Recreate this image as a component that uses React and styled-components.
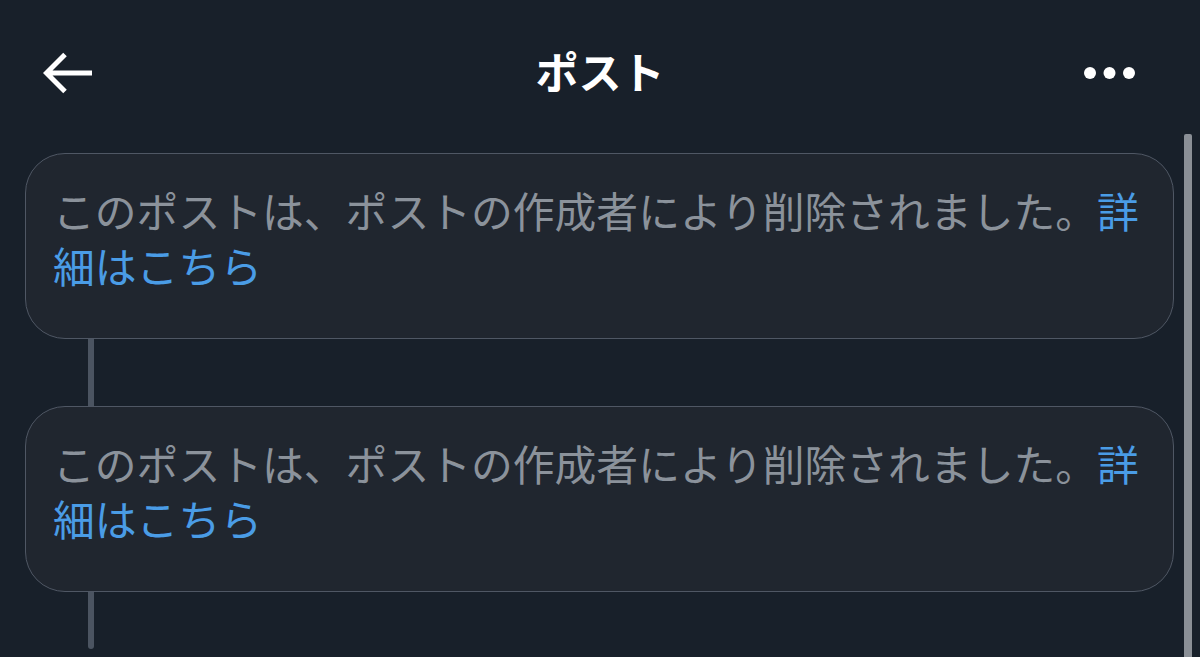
import React from "react";
import styled, { createGlobalStyle } from "styled-components";

const GlobalStyle = createGlobalStyle`
  html, body {
    margin: 0;
    padding: 0;
    background: #18202a;
  }
  body {
    font-family: "Noto Sans CJK JP", "Noto Sans", sans-serif;
  }
`;

const Page = styled.div`
  position: relative;
  width: 1200px;
  height: 657px;
  overflow: hidden;
  background: #18202a;
`;

const Header = styled.header`
  height: 145px;
  display: grid;
  grid-template-columns: 1fr auto 1fr;
  align-items: center;
  padding: 0 43px;
`;

const IconButton = styled.div`
  display: flex;
  align-items: center;
  justify-self: ${(props) => (props.end ? "end" : "start")};
  margin-right: ${(props) => (props.end ? "21px" : "0")};
`;

const Title = styled.h1`
  margin: 0 0 6px 0;
  font-size: 43px;
  font-weight: 700;
  color: #ffffff;
  letter-spacing: 0;
`;

const Thread = styled.div`
  padding: 8px 26px 0 25px;
  display: flex;
  flex-direction: column;
`;

const Card = styled.div`
  border: 1px solid #4f5764;
  border-radius: 40px;
  background: #20262f;
  padding: 29px 18px 45px 27px;
`;

const Message = styled.p`
  margin: 0;
  font-size: 41.8px;
  line-height: 55px;
  color: #8b929b;
`;

const More = styled.span`
  color: #4a9ce6;
`;

const Connector = styled.div`
  width: 6px;
  height: ${(props) => props.h}px;
  margin-left: 63px;
  background: #4b5461;
  border-radius: ${(props) => (props.last ? "0 0 3px 3px" : "0")};
`;

const Scrollbar = styled.div`
  position: absolute;
  top: 134px;
  right: 8px;
  width: 8px;
  height: 540px;
  background: #8a8f96;
  border-radius: 2px;
`;

const BackArrow = () => (
  <svg width="52" height="44" viewBox="0 0 52 44" fill="none">
    <path
      d="M49 22H4.5M22 3.5L3.5 22L22 40.5"
      stroke="#ffffff"
      strokeWidth="5"
      strokeLinecap="butt"
      strokeLinejoin="miter"
    />
  </svg>
);

const MoreDots = () => (
  <svg width="52" height="14" viewBox="0 0 52 14" fill="#ffffff">
    <circle cx="6" cy="7" r="6" />
    <circle cx="25.5" cy="7" r="6" />
    <circle cx="45" cy="7" r="6" />
  </svg>
);

const DeletedPost = () => (
  <Card>
    <Message>
      このポストは、ポストの作成者により削除されました。
      <More>詳細はこちら</More>
    </Message>
  </Card>
);

export default function App() {
  return (
    <Page>
      <GlobalStyle />
      <Header>
        <IconButton>
          <BackArrow />
        </IconButton>
        <Title>ポスト</Title>
        <IconButton end>
          <MoreDots />
        </IconButton>
      </Header>
      <Thread>
        <DeletedPost />
        <Connector h={67} />
        <DeletedPost />
        <Connector h={57} last />
      </Thread>
      <Scrollbar />
    </Page>
  );
}
